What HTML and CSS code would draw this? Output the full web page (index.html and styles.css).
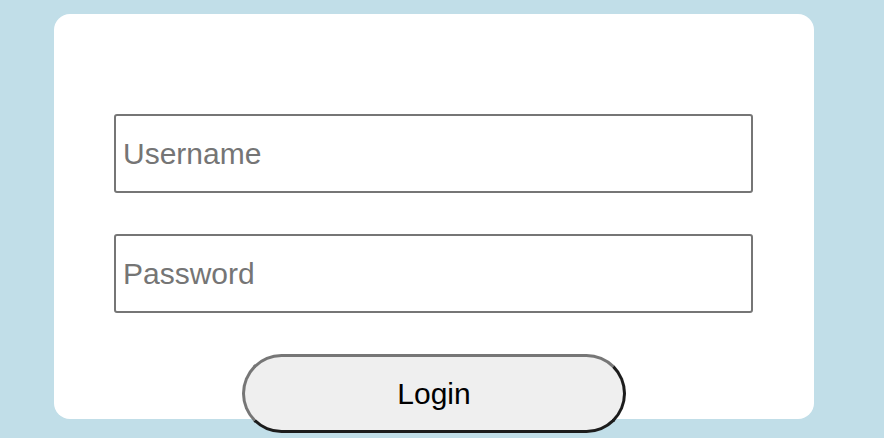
FILE: index.html
```html
<!DOCTYPE html>
<html>
<head>
<meta charset="utf-8">
<link rel="stylesheet" href="styles.css">
</head>
<body>
<div class="card">
  <input class="field" type="text" placeholder="Username">
  <input class="field" type="password" placeholder="Password">
  <button class="login">Login</button>
</div>
</body>
</html>
```
FILE: styles.css
```css
html {
  background: #c1dee8;
}
body {
  margin: 0;
  padding: 0 0 19px 0;
  background: #c1dee8;
  font-family: "Liberation Sans", Arial, sans-serif;
}
.card {
  box-sizing: border-box;
  margin: 14px 0 0 54px;
  width: 760px;
  height: 405px;
  background: #ffffff;
  border-radius: 16px;
  padding: 100px 60px 0 60px;
  display: flex;
  flex-direction: column;
  gap: 41px;
}
.field {
  box-sizing: border-box;
  flex-shrink: 0;
  width: 639px;
  height: 79px;
  margin: 0;
  border: 2px solid #767676;
  border-radius: 3px;
  padding: 0 7px;
  font-family: "Liberation Sans", Arial, sans-serif;
  font-size: 30px;
  color: #000;
  background: #fff;
  outline: none;
}
.field::placeholder {
  color: #757575;
}
.login {
  box-sizing: border-box;
  align-self: center;
  width: 384px;
  height: 79px;
  margin: 0;
  flex-shrink: 0;
  border: 3px solid;
  border-color: #767676 #1c1c1c #1c1c1c #767676;
  border-radius: 40px;
  background: #efefef;
  color: #000;
  font-family: "Liberation Sans", Arial, sans-serif;
  font-size: 30px;
  padding: 0;
}
```
